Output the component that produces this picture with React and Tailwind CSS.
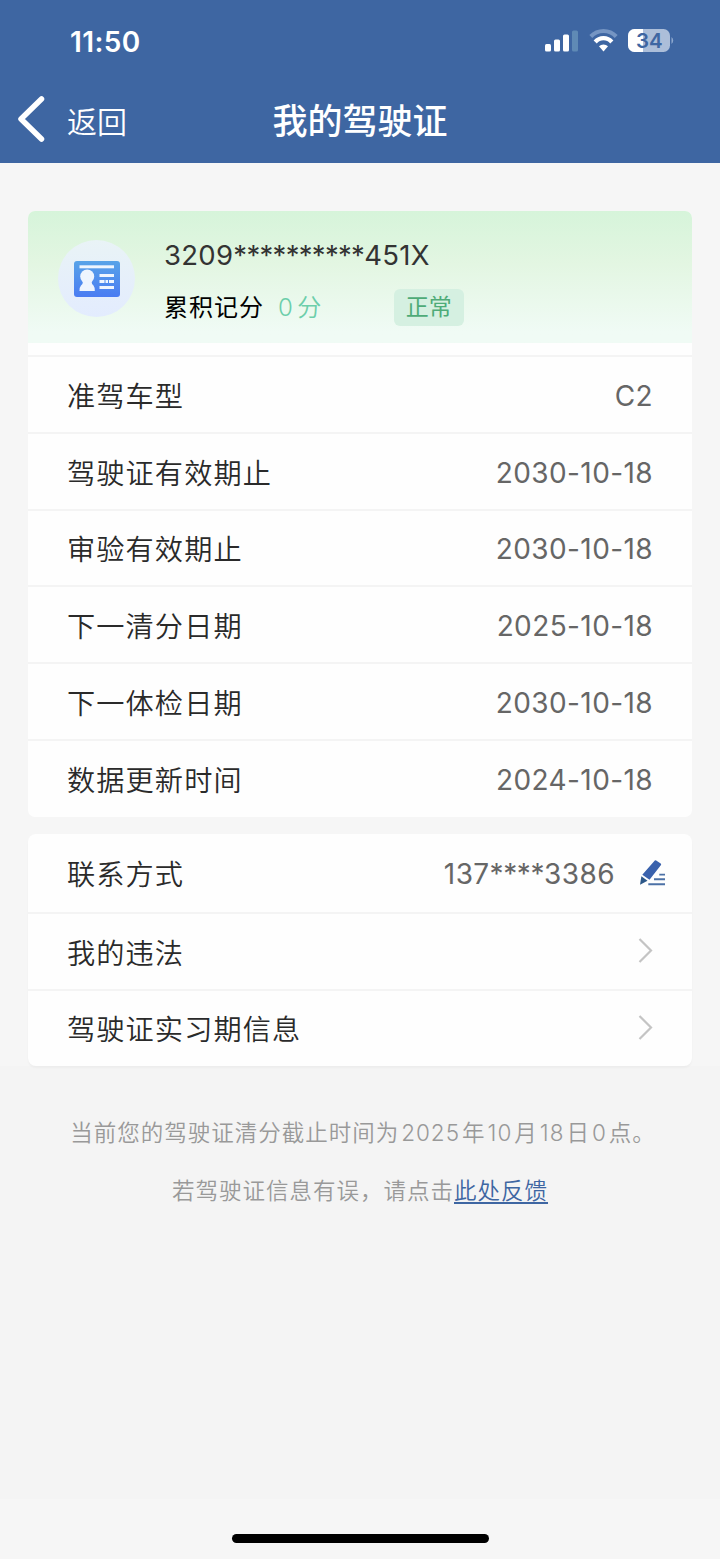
import React from 'react';

const licenseRows = [
  { label: '准驾车型', value: 'C2' },
  { label: '驾驶证有效期止', value: '2030-10-18' },
  { label: '审验有效期止', value: '2030-10-18' },
  { label: '下一清分日期', value: '2025-10-18' },
  { label: '下一体检日期', value: '2030-10-18' },
  { label: '数据更新时间', value: '2024-10-18' },
];

export default function App() {
  return (
    <div className="flex h-[1559px] w-[720px] flex-col overflow-hidden bg-[#f4f4f4] font-['Inter','Noto_Sans_CJK_SC',sans-serif]">
      <header className="h-[163px] shrink-0 bg-[#3e66a2] text-white">
        <StatusBar />
        <NavBar />
      </header>

      <main className="flex flex-col bg-[#f6f6f6] px-[28px] pt-[48px]">
        {/* License card */}
        <section className="overflow-hidden rounded-[7px] bg-[#fefefe] pb-px">
          <Summary />
          {licenseRows.map((row) => (
            <Row key={row.label} label={row.label}>
              <Value>{row.value}</Value>
            </Row>
          ))}
        </section>

        {/* Contact and links */}
        <section className="mt-[17px] overflow-hidden rounded-[8px] bg-[#fefefe] pb-px shadow-[0_2px_2px_rgba(0,0,0,0.03)]">
          <div className="flex h-[78px] items-center justify-between pr-[26px] pl-[39px]">
            <Label>联系方式</Label>
            <div className="flex items-center gap-[25px]">
              <Value>
                137<span className="tracking-[-0.4px]">****</span>3386
              </Value>
              <EditIcon />
            </div>
          </div>
          <Row label="我的违法">
            <Arrow />
          </Row>
          <Row label="驾驶证实习期信息">
            <Arrow />
          </Row>
        </section>
      </main>

      <div className="flex flex-col items-center pt-[38px] text-[22.5px] leading-[58px] font-[350] tracking-[1px] text-[#999]">
        <p className="pl-[6px] whitespace-nowrap">
          当前您的驾驶证清分截止时间为<Num>2025</Num>年<Num>10</Num>月<Num>18</Num>日<Num>0</Num>点。
        </p>
        <p className="whitespace-nowrap">
          若驾驶证信息有误，请点击
          <a className="text-[#3e66a2] underline decoration-2 underline-offset-3">此处反馈</a>
        </p>
      </div>

      <footer className="mt-auto flex h-[60px] items-center justify-center bg-[#f6f6f6] pt-[19px] pl-px">
        <div className="h-[9px] w-[257px] rounded-full bg-black" />
      </footer>
    </div>
  );
}

function StatusBar() {
  return (
    <div className="flex h-[80px] items-center justify-between pr-[45px] pl-[70px]">
      <span className="pt-[3px] text-[28px] font-semibold tracking-[0.4px]">11:50</span>
      <svg width="130" height="26" viewBox="0 0 130 26">
        {/* Signal */}
        <rect x="0" y="17" width="6" height="7.500" rx="1.500" fill="#fff" />
        <rect x="9" y="12.500" width="6" height="12" rx="1.500" fill="#fff" />
        <rect x="18" y="7.500" width="6" height="17" rx="1.500" fill="#fff" />
        <rect x="27" y="3.500" width="6" height="21" rx="1.500" fill="#5f8ab5" />
        {/* Wifi */}
        <path d="M45.800 9.500 A17.500 17.500 0 0 1 71.200 9.500" fill="none" stroke="#7595c3" strokeWidth="4" />
        <path d="M50.200 15 A11 11 0 0 1 66.800 15" fill="none" stroke="#fff" strokeWidth="4.200" />
        <path d="M54 19.200 A6.500 6.500 0 0 1 63 19.200 L58.500 24.500 Z" fill="#fff" />
        {/* Battery */}
        <clipPath id="battery">
          <rect x="83" y="2" width="42" height="23" rx="6.500" />
        </clipPath>
        <g clipPath="url(#battery)">
          <rect x="83" y="2" width="42" height="23" fill="#acbed9" />
          <rect x="83" y="2" width="15" height="23" fill="#fff" />
        </g>
        <path d="M126.500 10 a4.500 4.500 0 0 1 0 7 Z" fill="#8fa9cf" />
        <text x="104.300" y="21" textAnchor="middle" fill="#3e66a2" className="text-[20.500px] font-semibold">
          34
        </text>
      </svg>
    </div>
  );
}

function NavBar() {
  return (
    <div className="grid h-[83px] grid-cols-3 items-center">
      <div className="flex items-center pl-[17px]">
        <svg width="28" height="46" viewBox="0 0 28 46" fill="none" className="-mt-[6px]">
          <path d="M24.500 3 L4 23 L24.500 43" stroke="#fff" strokeWidth="5.500" strokeLinecap="round" strokeLinejoin="round" />
        </svg>
        <span className="ml-[22px] text-[30px] leading-[44px] font-[350]">返回</span>
      </div>
      <h1 className="text-center text-[35px] font-medium">我的驾驶证</h1>
    </div>
  );
}

function Summary() {
  return (
    <div className="flex h-[144px] bg-linear-to-b from-[#d6f4da] via-[#e3f6e2] via-40% to-[#f0fbf5] to-92% bg-[length:100%_132px] bg-no-repeat pl-[30px]">
      <div className="mt-[29px] flex h-[77px] w-[77px] items-center justify-center rounded-full bg-linear-to-b from-[#e9f3f6] to-[#e3ecfe]">
        <CardIcon />
      </div>
      <div className="ml-[29px] pt-[24px]">
        <div className="text-[27.5px] leading-[40px] tracking-[0.3px] text-[#333]">
          3209<span className="tracking-[-0.7px]">**********</span>451X
        </div>
        <div className="mt-[13px] flex items-center text-[24px] leading-[40px]">
          <span className="tracking-[1px] text-black">累积记分</span>
          <span className="ml-[14px] font-[350] tracking-[0.5px] text-[#6cceaa]">
            0<span className="ml-[4px]">分</span>
          </span>
          <span className="ml-[72px] -mt-px rounded-[6px] bg-[#d5f0e1] px-[12px] text-[23px] leading-[37px] text-[#4eab78]">正常</span>
        </div>
      </div>
    </div>
  );
}

function Label({ children }) {
  return <span className="pt-[5px] text-[28.2px] font-[350] tracking-[1.1px] text-[#2a2a2a]">{children}</span>;
}

function Value({ children }) {
  return <span className="pt-[3px] text-[28px] font-[380] tracking-[0.4px] text-[#666]">{children}</span>;
}

function Num({ children }) {
  return <span className="mx-[2px]">{children}</span>;
}

function Row({ label, children }) {
  return (
    <div className="flex h-[76.8px] items-center justify-between border-t-2 border-[#f4f4f4] px-[39px]">
      <Label>{label}</Label>
      {children}
    </div>
  );
}

function CardIcon() {
  return (
    <svg width="46" height="36" viewBox="0 0 46 36">
      <defs>
        <linearGradient id="card" x1="0" y1="0" x2="0" y2="1">
          <stop offset="0" stopColor="#58a3e8" />
          <stop offset="1" stopColor="#4a7cf2" />
        </linearGradient>
      </defs>
      <rect width="46" height="36" rx="3" fill="url(#card)" />
      <g fill="#eef5fe">
        <rect x="5.500" y="4.300" width="34.500" height="3" />
        <circle cx="13.200" cy="15.500" r="7" />
        <path d="M9 20 H17.500 Q17.500 23 19.500 24.500 Q20.800 26 20.800 30 H5.500 Q5.500 26 7 24.500 Q9 23 9 20 Z" />
        <rect x="25.500" y="13" width="14.500" height="3" />
        <rect x="25.500" y="19" width="5" height="3" />
        <rect x="31.500" y="19" width="2.500" height="3" />
        <rect x="35" y="19" width="5" height="3" />
        <rect x="25.500" y="25" width="14.500" height="3" />
      </g>
    </svg>
  );
}

function EditIcon() {
  return (
    <svg width="26" height="26" viewBox="0 0 26 26">
      <path d="M14.800 0.600 Q15.500 0 16.200 0.500 L20.700 3.500 Q21.500 4.200 21 5 L9.500 19.800 L2.300 14.700 Z" fill="#3a62ad" />
      <path d="M1.400 16.300 L7.500 20.700 L0 24.800 Z" fill="#2c5788" />
      <path d="M19.300 14.600 H25 M14 19.300 H25 M8.300 24.300 H25" stroke="#4c71a6" strokeWidth="1.900" />
    </svg>
  );
}

function Arrow() {
  return (
    <svg width="15" height="26" viewBox="0 0 15 26" fill="none">
      <path d="M1.500 1 L13 12.500 L1.500 24" stroke="#c4c4c4" strokeWidth="2.200" />
    </svg>
  );
}
